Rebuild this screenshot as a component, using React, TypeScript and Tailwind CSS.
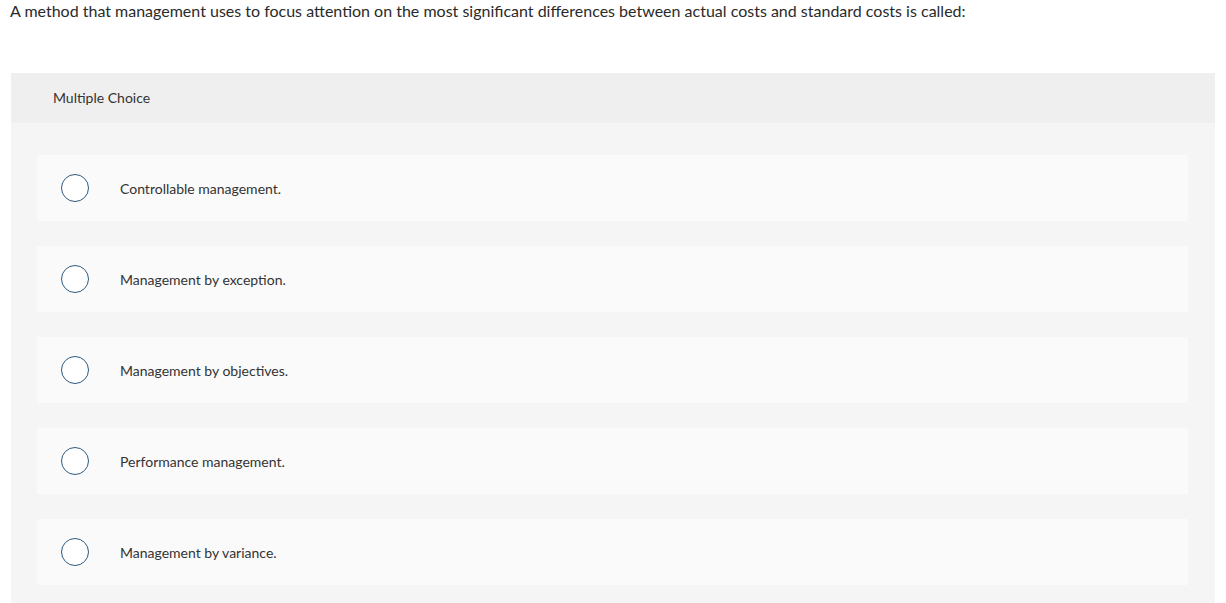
const OPTIONS = [
  "Controllable management.",
  "Management by exception.",
  "Management by objectives.",
  "Performance management.",
  "Management by variance.",
];

function Radio() {
  return (
    <span
      aria-hidden="true"
      className="h-[28px] w-[28px] shrink-0 rounded-full border-[1.5px] border-[#2c5a80] bg-white"
    />
  );
}

export default function App() {
  return (
    <div className="min-h-screen bg-white font-['Lato','Liberation_Sans',sans-serif] text-[#333]">
      <p className="pl-[10px] text-[16px] leading-[22px] text-[#2a2a2a]">
        A method that management uses to focus attention on the most significant differences between
        actual costs and standard costs is called:
      </p>

      <section className="ml-[11px] mr-[11px] mt-[51px] bg-[#f5f5f5] pb-[20px]">
        <div className="flex h-[50px] items-center bg-[#efefef] pl-[42px] text-[14px] text-[#333]">
          <span className="-mt-[2px]">Multiple Choice</span>
        </div>

        <ul className="flex flex-col gap-[25px] pl-[26px] pr-[27px] pt-[32px]">
          {OPTIONS.map((option) => (
            <li key={option} className="flex h-[66px] items-center bg-[#fafafa] pl-[24px]">
              <Radio />
              <span className="ml-[31px] text-[14px] text-[#333]">{option}</span>
            </li>
          ))}
        </ul>
      </section>
    </div>
  );
}
